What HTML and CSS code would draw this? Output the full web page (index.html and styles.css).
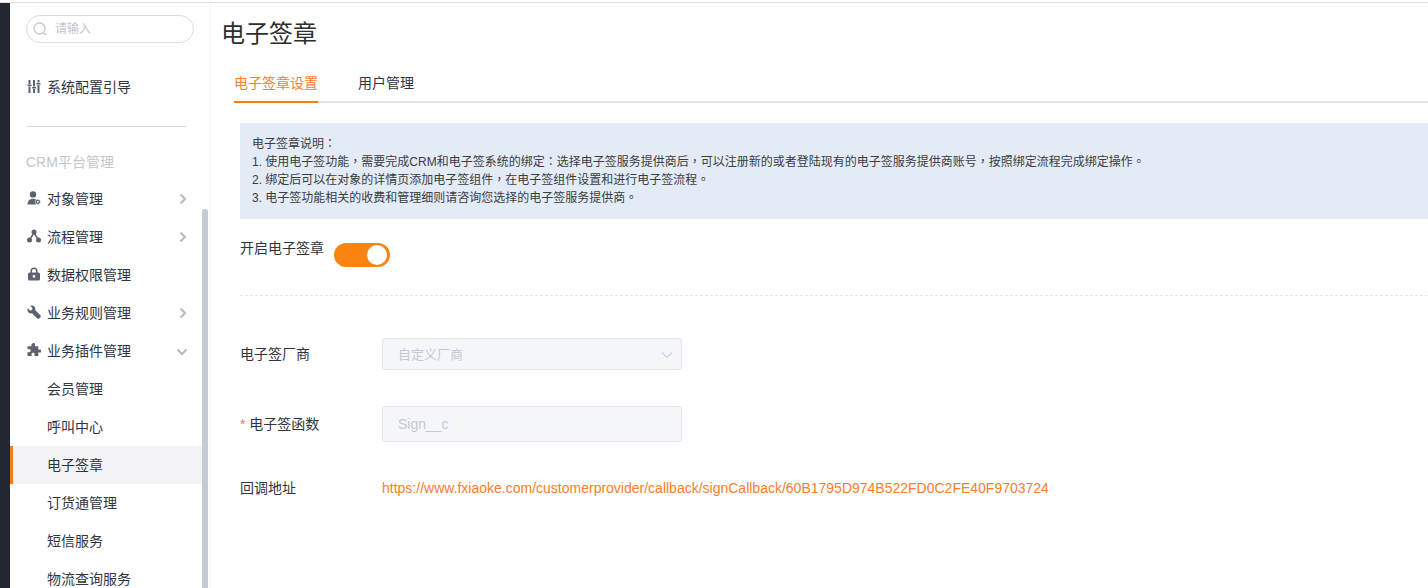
FILE: index.html
```html
<!DOCTYPE html>
<html lang="zh-CN">
<head>
<meta charset="utf-8">
<title>电子签章</title>
<link rel="stylesheet" href="styles.css">
</head>
<body>
<div class="app">
  <div class="rail"></div>
  <aside class="sidebar">
    <div class="search">
      <svg class="search-icon" viewBox="0 0 16 16" width="16" height="16"><circle cx="7.5" cy="7.5" r="5.6"/><path d="M11.6 11.6L14 14"/></svg>
      <span>请输入</span>
    </div>
    <div class="nav-item guide">
      <svg class="nav-icon" viewBox="0 0 14 14"><path d="M1.500 1h2v4h-2zM1.500 7.500h2V14h-2zM.5 5.500h4V7h-4zM6 1h2v6.500H6zM6 10h2v4H6zM5 8h4v1.500H5zM10.500 1h2v2.500h-2zM10.500 6h2v8h-2zM9.500 4h4v1.500h-4z"/></svg>
      <span>系统配置引导</span>
    </div>
    <div class="divider"></div>
    <div class="group-title">CRM平台管理</div>
    <nav>
      <div class="nav-item">
        <svg class="nav-icon" viewBox="0 0 14 14"><circle cx="6" cy="3.400" r="3.200"/><path d="M0.500 13.500c0-3.600 2-5.800 5.500-5.800 1.400 0 2.500.3 3.300 1v4.800z"/><circle class="cut" cx="10.800" cy="10.800" r="2.600"/><circle class="hole" cx="10.800" cy="10.800" r=".9"/></svg>
        <span>对象管理</span>
        <svg class="chev" viewBox="0 0 10 12"><path d="M2.500 1.500L7 6l-4.500 4.500"/></svg>
      </div>
      <div class="nav-item">
        <svg class="nav-icon" viewBox="0 0 14 14"><circle cx="7" cy="3" r="2.500"/><circle cx="2.500" cy="11" r="2.500"/><circle cx="11.500" cy="11" r="2.500"/><path class="link" d="M7 4L3 10M7 4l4 6"/></svg>
        <span>流程管理</span>
        <svg class="chev" viewBox="0 0 10 12"><path d="M2.500 1.500L7 6l-4.500 4.500"/></svg>
      </div>
      <div class="nav-item">
        <svg class="nav-icon" viewBox="0 0 14 14"><path fill-rule="evenodd" d="M3.500 5.500V4a3.500 3.500 0 0 1 7 0v1.500h1A1.500 1.500 0 0 1 13 7v5a1.500 1.500 0 0 1-1.500 1.500h-9A1.500 1.500 0 0 1 1 12V7a1.500 1.500 0 0 1 1.500-1.500zM5 5.500h4V4a2 2 0 0 0-4 0zM7 8a1.400 1.400 0 1 0 0 2.800A1.400 1.400 0 0 0 7 8z"/></svg>
        <span>数据权限管理</span>
      </div>
      <div class="nav-item">
        <svg class="nav-icon" viewBox="0 0 14 14"><path transform="matrix(-1 0 0 1 14 0)" d="M13.300 3.200l-2.300 2.200-2-.5-.5-2L10.800.7C9 0 7.200.5 6.300 1.800c-.7 1-.8 2.100-.4 3.200L.8 10a1.700 1.700 0 0 0 0 2.400l.8.800a1.700 1.700 0 0 0 2.400 0L9 8.200c1.100.4 2.300.2 3.200-.5 1.300-1 1.800-2.800 1.100-4.500z"/></svg>
        <span>业务规则管理</span>
        <svg class="chev" viewBox="0 0 10 12"><path d="M2.500 1.500L7 6l-4.500 4.500"/></svg>
      </div>
      <div class="nav-item">
        <svg class="nav-icon" viewBox="0 0 14 14"><path d="M5 1.500C5 .6 5.700 0 6.600 0s1.600.6 1.600 1.500c0 .5-.3.900-.3 1.300 0 .3.300.5.700.5h2.700v2.800c0 .4.300.6.600.6.400 0 .7-.3 1.200-.3.800 0 1.400.7 1.400 1.600s-.6 1.600-1.400 1.600c-.5 0-.8-.3-1.200-.3-.3 0-.6.200-.6.600V13H8c-.4 0-.6-.3-.6-.6 0-.4.300-.7.300-1.200 0-.8-.7-1.400-1.600-1.400s-1.600.6-1.600 1.400c0 .5.300.8.300 1.200 0 .3-.2.600-.6.600H.5V9.500c0-.4.300-.6.600-.6.400 0 .7.300 1.200.3C3.100 9.200 3.700 8.500 3.700 7.600S3.100 6 2.300 6c-.5 0-.8.300-1.200.3-.3 0-.6-.2-.6-.6V3.300h3.400c.4 0 .8-.2.800-.5 0-.4-.7-.8-.7-1.300z"/></svg>
        <span>业务插件管理</span>
        <svg class="chev chev-down" viewBox="0 0 12 10"><path d="M1.500 2.500L6 7l4.500-4.500"/></svg>
      </div>
      <div class="nav-item sub">会员管理</div>
      <div class="nav-item sub">呼叫中心</div>
      <div class="nav-item sub active">电子签章</div>
      <div class="nav-item sub">订货通管理</div>
      <div class="nav-item sub">短信服务</div>
      <div class="nav-item sub">物流查询服务</div>
    </nav>
    <div class="scroll-thumb"></div>
  </aside>
  <main class="main">
    <h1 class="title">电子签章</h1>
    <div class="tabs">
      <div class="tab tab-active">电子签章设置</div>
      <div class="tab">用户管理</div>
    </div>
    <div class="notice" lang="zh-TW">
      <div>电子签章说明：</div>
      <div>1. 使用电子签功能，需要完成CRM和电子签系统的绑定：选择电子签服务提供商后，可以注册新的或者登陆现有的电子签服务提供商账号，按照绑定流程完成绑定操作。</div>
      <div>2. 绑定后可以在对象的详情页添加电子签组件，在电子签组件设置和进行电子签流程。</div>
      <div>3. 电子签功能相关的收费和管理细则请咨询您选择的电子签服务提供商。</div>
    </div>
    <div class="switch-row">
      <span class="switch-label">开启电子签章</span>
      <div class="switch"><div class="knob"></div></div>
    </div>
    <div class="dashed"></div>
    <div class="form-row row-select">
      <label class="form-label">电子签厂商</label>
      <div class="field field-select">
        <span>自定义厂商</span>
        <svg class="select-arrow" viewBox="0 0 12 8" width="12" height="8"><path d="M1 1.500L6 6.500l5-5"/></svg>
      </div>
    </div>
    <div class="form-row row-input">
      <label class="form-label"><span class="req">*</span> 电子签函数</label>
      <div class="field field-input">Sign__c</div>
    </div>
    <div class="form-row row-link">
      <label class="form-label">回调地址</label>
      <a class="link-url">https://www.fxiaoke.com/customerprovider/callback/signCallback/60B1795D974B522FD0C2FE40F9703724</a>
    </div>
  </main>
</div>
</body>
</html>
```
FILE: styles.css
```css
* { box-sizing: border-box; }
html, body { margin: 0; padding: 0; height: 100%; overflow: hidden; background: #fff; }
body {
  font-family: "Liberation Sans", "Noto Sans CJK SC", sans-serif;
  font-size: 14px;
  color: #2f3441;
}
.app {
  display: flex;
  height: 586px;
  margin-top: 2px;
  border-top: 1px solid #dfdfdf;
  overflow: hidden;
}
.rail { width: 10px; flex: none; background: #222731; }
.sidebar {
  position: relative;
  width: 201px;
  flex: none;
  border-right: 1px solid #f5f6f8;
  padding-top: 12px;
  overflow: hidden;
}
.search {
  display: flex;
  align-items: center;
  width: 168px;
  height: 28px;
  margin-left: 16px;
  padding-left: 5px;
  border: 1px solid #dcdde6;
  border-radius: 14px;
  font-size: 12px;
  line-height: 26px;
  color: #c1c5ce;
}
.search-icon { fill: none; stroke: #b9bec8; stroke-width: 1.1; margin-right: 7px; }
.nav-item {
  display: flex;
  align-items: center;
  height: 38px;
  padding-left: 37px;
  position: relative;
  white-space: nowrap;
}
.nav-item.guide { padding-left: 17px; margin-top: 24px; }
nav .nav-item { padding-left: 17px; padding-bottom: 2px; width: 192px; }
nav .nav-item.sub { padding-left: 37px; }
.nav-icon { width: 14px; height: 14px; fill: #5c6270; margin-right: 6px; flex: none; }
.nav-icon .cut { fill: #5c6270; stroke: #fff; stroke-width: .6; }
.nav-icon .hole { fill: #fff; }
.nav-icon .link { fill: none; stroke: #5c6270; stroke-width: 1.400; }
.chev {
  position: absolute;
  left: 168px;
  top: 13px;
  width: 10px;
  height: 12px;
  fill: none;
  stroke: #b6bac3;
  stroke-width: 2;
}
.chev-down { left: 166px; top: 15px; width: 12px; height: 10px; }
.divider { width: 160px; height: 1px; margin: 21px 0 0 16px; background: #d9d9de; }
.group-title { margin: 27px 0 0 16px; height: 16px; line-height: 16px; color: #c4c6cc; }
.group-title + nav { margin-top: 10px; }
.nav-item.active { background: #f4f4f7; box-shadow: inset 3px 0 0 #f6800f; }
.scroll-thumb {
  position: absolute;
  left: 192px;
  top: 206px;
  bottom: -4px;
  width: 6px;
  border-radius: 3px 3px 0 0;
  background: #c5cbd4;
}
.main { flex: 1; min-width: 0; }
.title {
  margin: 1px 0 0 10px;
  height: 59px;
  font-size: 24px;
  font-weight: 400;
  line-height: 60px;
  color: #2e2e2e;
}
.tabs {
  display: flex;
  gap: 40px;
  height: 40px;
  margin-left: 23px;
  border-bottom: 2px solid #e2e4e8;
}
.tab { height: 40px; line-height: 40px; color: #2f3441; }
.tab-active { color: #fb7e2c; border-bottom: 2px solid #f6800f; }
.notice {
  margin: 20px 0 0 29px;
  padding: 12px;
  background: #e3ebf6;
  font-family: "Liberation Sans", "Noto Sans CJK TC", sans-serif;
  font-size: 12px;
  line-height: 18px;
  color: #3a3c42;
}
.switch-row { display: flex; margin: 24px 0 0 29px; }
.switch-label { margin-right: 10px; height: 20px; line-height: 20px; margin-top: -5px; }
.switch {
  display: flex;
  justify-content: flex-end;
  align-items: center;
  width: 56px;
  height: 24px;
  padding-right: 3px;
  border-radius: 12px;
  background: #fb8312;
}
.knob { width: 20px; height: 20px; border-radius: 50%; background: #fff; }
.dashed { margin: 28px 0 0 29px; border-top: 1px dashed #e4e6ea; }
.form-row { display: flex; align-items: center; margin-left: 29px; }
.form-label { width: 142px; flex: none; position: relative; top: -1px; }
.req { color: #f27474; }
.row-select { margin-top: 42px; }
.row-input { margin-top: 36px; }
.row-link { margin-top: 36px; height: 20px; }
.field {
  width: 300px;
  padding-left: 15px;
  border: 1px solid #e5e7ef;
  border-radius: 3px;
  background: #f5f6fa;
  color: #c5c8d0;
  display: flex;
  align-items: center;
}
.field-select { height: 32px; font-size: 13px; position: relative; }
.field-select span { position: relative; top: -1px; }
.field-input { height: 36px; }
.select-arrow {
  position: absolute;
  right: 8px;
  top: 12px;
  fill: none;
  stroke: #ccd0d8;
  stroke-width: 1.200;
}
.link-url { color: #fb7e2c; white-space: nowrap; }
```
